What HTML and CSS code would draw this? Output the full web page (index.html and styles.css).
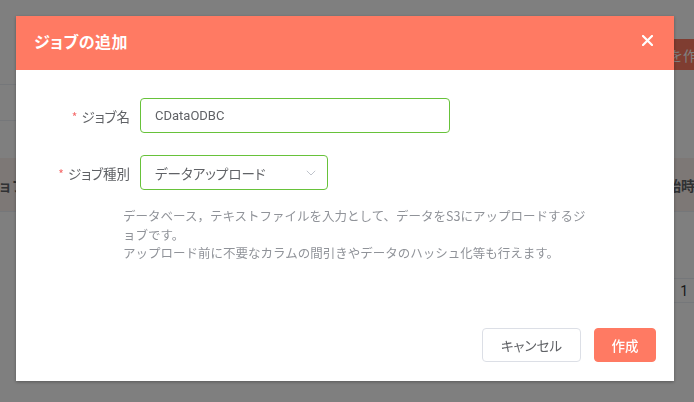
FILE: index.html
```html
<!DOCTYPE html>
<html lang="ja">
<head>
<meta charset="utf-8">
<link rel="stylesheet" href="styles.css">
</head>
<body>
<div class="page">
  <div class="topbar">
    <div class="side-lines">
      <div class="side-line"></div>
      <div class="side-line second"></div>
    </div>
    <button class="page-btn">ジョブを作成</button>
  </div>
  <div class="table">
    <div class="thead">
      <span class="th-left">ジョブ</span>
      <span class="th-right">開始時刻</span>
    </div>
    <div class="trow">
      <span class="pager">1</span>
    </div>
  </div>
</div>
<div class="overlay"></div>
<div class="dialog">
  <div class="dialog-header">
    <span class="dialog-title">ジョブの追加</span>
    <svg class="close" width="11" height="11" viewBox="0 0 11 11"><path d="M1 1L10 10M10 1L1 10" stroke="#fff" stroke-width="2.2" stroke-linecap="round"/></svg>
  </div>
  <div class="dialog-body">
    <div class="form-row">
      <label class="form-label"><span class="req">*</span>ジョブ名</label>
      <div class="input name-input">CDataODBC</div>
    </div>
    <div class="form-row">
      <label class="form-label"><span class="req">*</span>ジョブ種別</label>
      <div class="input select-input">
        <span>データアップロード</span>
        <svg class="chev" width="10" height="6" viewBox="0 0 10 6"><path d="M0.8 0.8L5 5L9.2 0.8" fill="none" stroke="#C0C4CC" stroke-width="1"/></svg>
      </div>
    </div>
    <p class="desc">データベース，テキストファイルを入力として、データをS3にアップロードするジョブです。<br>アップロード前に不要なカラムの間引きやデータのハッシュ化等も行えます。</p>
  </div>
  <div class="dialog-footer">
    <button class="btn btn-cancel">キャンセル</button>
    <button class="btn btn-primary">作成</button>
  </div>
</div>
</body>
</html>
```

FILE: styles.css
```css
* { box-sizing: border-box; }
html, body {
  margin: 0;
  width: 694px;
  height: 402px;
  overflow: hidden;
  font-family: "Noto Sans CJK JP", "Noto Sans", sans-serif;
  background: #fff;
}
.page {
  width: 694px;
  height: 402px;
  background: #fff;
  overflow: hidden;
}
.topbar {
  height: 158px;
  display: flex;
  justify-content: space-between;
}
.side-lines {
  width: 300px;
  padding-top: 84px;
}
.side-line {
  height: 1px;
  background: #ebeef5;
}
.side-line.second { margin-top: 35px; }
.page-btn {
  margin-top: 39px;
  height: 31px;
  width: 120px;
  margin-right: -40px;
  border: 0;
  border-radius: 4px;
  background: #ff7a63;
  color: #fff;
  font-family: inherit;
  font-size: 14px;
  padding: 0 0 0 13px;
  text-align: left;
  white-space: nowrap;
  flex-shrink: 0;
}
.thead {
  height: 54px;
  background: #fbf1ec;
  border-bottom: 1px solid #ebeef5;
  display: flex;
  justify-content: space-between;
  align-items: center;
  font-weight: bold;
  color: #606266;
  font-size: 14px;
}
.th-left { margin-left: -16px; }
.th-right { margin-right: -15px; }
.trow {
  margin-top: 66px;
  height: 25px;
  border-top: 1px solid #ebeef5;
  border-bottom: 1px solid #ebeef5;
  margin-left: 600px;
  display: flex;
  justify-content: flex-end;
  align-items: center;
  padding-right: 6px;
  font-family: "Roboto", sans-serif;
  font-size: 14px;
  color: #303133;
}
.overlay {
  position: fixed;
  inset: 0;
  background: rgba(0, 0, 0, 0.5);
}
.dialog {
  position: absolute;
  left: 16px;
  top: 16px;
  width: 658px;
  height: 365px;
  background: #fff;
  box-shadow: 0 1px 3px rgba(0, 0, 0, 0.3);
  display: flex;
  flex-direction: column;
}
.dialog-header {
  height: 54px;
  background: #ff7a63;
  display: flex;
  align-items: center;
  justify-content: space-between;
  padding: 0 21px 4px 18px;
}
.dialog-title {
  color: #fff;
  font-size: 16px;
  font-weight: bold;
  font-feature-settings: "palt";
  letter-spacing: 0.5px;
}
.close { margin-top: -2px; }
.dialog-body {
  flex: 1;
  padding-top: 28px;
}
.form-row {
  display: flex;
  align-items: center;
  margin-bottom: 22px;
}
.form-label {
  width: 124px;
  padding-right: 10px;
  text-align: right;
  font-size: 13.5px;
  color: #606266;
  font-feature-settings: "palt";
}
.req {
  color: #f56c6c;
  font-size: 12px;
  margin-right: 4px;
}
.input {
  height: 35px;
  border: 1px solid #67c23a;
  border-radius: 4px;
  display: flex;
  align-items: center;
  padding: 0 10px 0 14px;
  font-size: 13.5px;
  color: #606266;
  font-feature-settings: "palt";
}
.name-input {
  width: 310px;
  font-family: "Roboto", sans-serif;
  font-size: 13px;
}
.select-input {
  width: 188px;
  justify-content: space-between;
}
.chev { margin-right: 1px; }
.desc {
  margin: -5px 0 0 107px;
  width: 470px;
  font-size: 12.5px;
  line-height: 18.5px;
  color: #909399;
}
.dialog-footer {
  display: flex;
  justify-content: flex-end;
  gap: 13px;
  padding: 0 18px 19px 0;
}
.btn {
  height: 34px;
  border-radius: 4px;
  font-family: inherit;
  font-size: 13.5px;
  font-feature-settings: "palt";
  cursor: pointer;
}
.btn-cancel {
  width: 99px;
  background: #fff;
  border: 1px solid #dcdfe6;
  color: #606266;
}
.btn-primary {
  width: 62px;
  background: #ff7a63;
  border: 1px solid #ff7a63;
  color: #fff;
  font-weight: 500;
}
```
